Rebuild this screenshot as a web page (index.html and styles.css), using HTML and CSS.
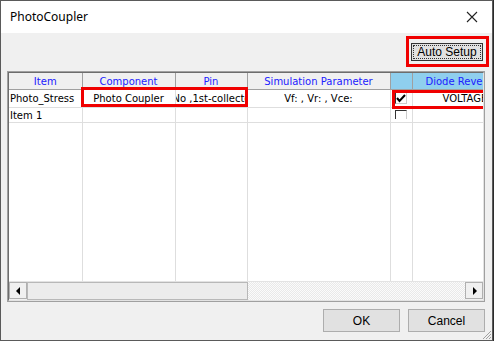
FILE: index.html
```html
<!DOCTYPE html>
<html lang="en">
  <head>
    <meta charset="UTF-8" />
    <title>PhotoCoupler</title>
    <link rel="stylesheet" href="styles.css">
  </head>
  <body>
    <div class="window">
      <div class="titlebar">
        <span class="title">PhotoCoupler</span>
        <svg class="close" width="12" height="12" viewBox="0 0 12 12">
          <path d="M1 1 L11 11 M11 1 L1 11" stroke="#222" stroke-width="1.1" fill="none" />
        </svg>
      </div>
      <div class="content">
        <div class="toolbar">
          <div class="mark">
            <button class="btn auto">Auto Setup</button>
          </div>
        </div>
        <div class="grid">
          <div class="grid-inner">
            <table class="sheet">
              <colgroup>
                <col style="width:73px" />
                <col style="width:93px" />
                <col style="width:72px" />
                <col style="width:143px" />
                <col style="width:22px" />
                <col style="width:100px" />
              </colgroup>
              <thead>
                <tr>
                  <th>Item</th>
                  <th>Component</th>
                  <th>Pin</th>
                  <th>Simulation Parameter</th>
                  <th class="sel"></th>
                  <th class="sel diode"><span>Diode Reverse</span></th>
                </tr>
              </thead>
              <tbody>
                <tr class="first">
                  <td class="left">Photo_Stress</td>
                  <td>Photo Coupler</td>
                  <td class="pin"><span>No ,1st-collector</span></td>
                  <td>Vf: , Vr: , Vce:</td>
                  <td class="chk">
                    <span class="box">
                      <svg width="10" height="9" viewBox="0 0 10 9"><path d="M1 4 L3.5 7 L9 1" stroke="#000" stroke-width="2" fill="none" /></svg>
                    </span>
                  </td>
                  <td class="right"><span class="volt">VOLTAGE</span></td>
                </tr>
                <tr class="second">
                  <td class="left">Item 1</td>
                  <td></td>
                  <td></td>
                  <td></td>
                  <td class="chk"><span class="box cut"></span></td>
                  <td></td>
                </tr>
                <tr class="filler">
                  <td></td><td></td><td></td><td></td><td></td><td></td>
                </tr>
              </tbody>
            </table>
            <div class="hmark one"></div>
            <div class="hmark two"></div>
            <div class="scrollbar">
              <div class="arrow">
                <svg width="5" height="8" viewBox="0 0 5 8"><path d="M4 0 L0 4 L4 8 Z" fill="#000" /></svg>
              </div>
              <div class="thumb"></div>
              <div class="track"></div>
              <div class="arrow">
                <svg width="5" height="8" viewBox="0 0 5 8"><path d="M1 0 L5 4 L1 8 Z" fill="#000" /></svg>
              </div>
            </div>
          </div>
        </div>
        <div class="footer">
          <button class="btn big">OK</button>
          <button class="btn big">Cancel</button>
        </div>
      </div>
      <svg class="grip" width="12" height="12" viewBox="0 0 12 12">
        <path d="M11 3 L3 11 M11 6 L6 11 M11 9 L9 11" stroke="#a0a0a0" stroke-width="1" />
      </svg>
    </div>
  </body>
</html>
```

FILE: styles.css
```css
html,
body {
  margin: 0;
  padding: 0;
}

body {
  width: 494px;
  height: 341px;
  background: #2b2b2b;
  overflow: hidden;
}

.window {
  position: relative;
  width: 491px;
  height: 339px;
  border: 1px solid #5a5a5a;
  background: #f0f0f0;
  display: flex;
  flex-direction: column;
}

.titlebar {
  height: 32px;
  flex-shrink: 0;
  background: #fff;
  display: flex;
  align-items: center;
  justify-content: space-between;
  padding: 0 14px 0 9px;
}

.title {
  font-family: "Noto Sans", sans-serif;
  font-size: 12px;
  color: #000;
  margin-top: -2px;
}

.close {
  margin-top: -1px;
}

.content {
  flex: 1;
  display: flex;
  flex-direction: column;
}

.toolbar {
  display: flex;
  justify-content: flex-end;
  padding: 3px 3px 0 0;
  height: 38px;
  box-sizing: border-box;
  flex-shrink: 0;
}

.mark {
  border: 3px solid #f00000;
  padding: 4px 3px 3px 2px;
  height: 31px;
  width: 83px;
  box-sizing: border-box;
  display: flex;
}

.btn {
  font-family: "Liberation Sans", Arial, sans-serif;
  font-size: 12px;
  color: #000;
  background: #e1e1e1;
  border: 1px solid #adadad;
  padding: 0;
  margin: 0;
}

.auto {
  width: 72px;
  height: 18px;
  outline: 1px dotted #333;
  outline-offset: -3px;
  border-color: #333;
  font-size: 12px;
}

.grid {
  margin: 0 0 0 6px;
  width: 478px;
  height: 231px;
  border: 1px solid #a0a0a0;
  box-sizing: border-box;
  flex-shrink: 0;
}

.grid-inner {
  position: relative;
  height: 100%;
  border: 1px solid #6d6d6d;
  border-right-color: #e3e3e3;
  border-bottom-color: #e3e3e3;
  box-sizing: border-box;
  background: #fff;
  overflow: hidden;
  display: flex;
  flex-direction: column;
}

.sheet {
  table-layout: fixed;
  border-collapse: collapse;
  width: 503px;
  flex: 1;
  font-family: "DejaVu Sans", Tahoma, sans-serif;
  font-size: 10px;
  color: #000;
}

.sheet th {
  height: 16px;
  padding: 0;
  font-weight: normal;
  color: #2020ff;
  background: #f0f0f0;
  border-right: 1px solid #a0a0a0;
  border-bottom: 1px solid #a0a0a0;
  white-space: nowrap;
  overflow: hidden;
}

.sheet th.sel {
  background: #8fcfee;
}

.sheet th.diode span {
  display: block;
  text-align: left;
  padding-left: 13px;
}

.sheet td {
  padding: 0;
  text-align: center;
  border-right: 1px solid #dedede;
  border-bottom: 1px solid #dedede;
  white-space: nowrap;
  overflow: hidden;
}

.sheet tr.first td {
  height: 17px;
}

.sheet tr.second td {
  height: 14px;
}

.sheet td.left {
  text-align: left;
  padding-left: 1px;
}

.sheet td.pin {
  text-align: left;
}

.sheet td.pin span {
  display: inline-block;
  margin-left: -3px;
}

.sheet td.right {
  text-align: left;
}

.volt {
  display: inline-block;
  margin-left: 30px;
}

.sheet tr.filler td {
  height: auto;
  border-bottom: none;
}

.chk {
  vertical-align: top;
}

.box {
  display: flex;
  align-items: center;
  justify-content: center;
  width: 12px;
  height: 12px;
  margin: 2px 0 0 4px;
  border: 1px solid #333;
  border-right-color: #ccc;
  border-bottom-color: #ccc;
  box-sizing: border-box;
}

.box.cut {
  height: 9px;
  margin-top: 2px;
  border-bottom: none;
}

.hmark {
  position: absolute;
  border: 3px solid #f00000;
  box-sizing: border-box;
}

.hmark.one {
  left: 72px;
  top: 14px;
  width: 167px;
  height: 20px;
}

.hmark.two {
  left: 383px;
  top: 17px;
  width: 95px;
  height: 19px;
}

.scrollbar {
  display: flex;
  height: 18px;
  border-top: 1px solid #e3e3e3;
  background: #f0f0f0;
}

.arrow {
  width: 18px;
  height: 17px;
  display: flex;
  align-items: center;
  justify-content: center;
  border: 1px solid #b0b0b0;
  box-sizing: border-box;
  background: #f0f0f0;
}

.thumb {
  width: 221px;
  border: 1px solid #b8b8b8;
  box-sizing: border-box;
  background: #ececec;
}

.track {
  flex: 1;
  background: repeating-conic-gradient(#e9e9e9 0 25%, #fbfbfb 0 50%) 0 0 / 2px 2px;
}

.footer {
  display: flex;
  justify-content: flex-end;
  gap: 8px;
  padding: 7px 7px 0 0;
}

.big {
  width: 77px;
  height: 23px;
  border-color: #adadad;
}

.grip {
  position: absolute;
  right: 0;
  bottom: 0;
}
```
